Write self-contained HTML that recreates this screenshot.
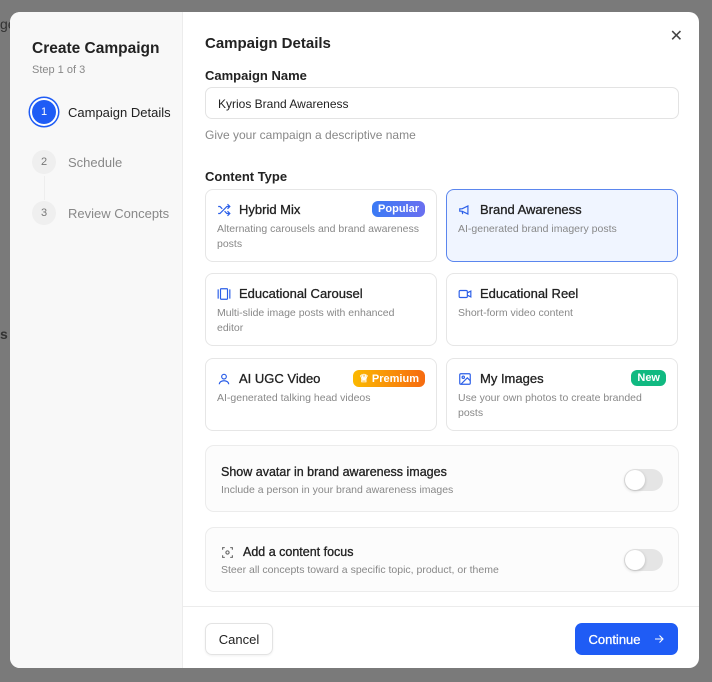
<!DOCTYPE html>
<html><head><meta charset="utf-8"><style>
*{box-sizing:border-box;margin:0;padding:0}
body{width:712px;height:682px;background:#7a7a7a;font-family:"Liberation Sans",sans-serif;position:relative;overflow:hidden;color:#1a1a1a}
.bgtxt{position:absolute;color:#333;font-size:14px}
.modal{position:absolute;left:10px;top:12px;width:689px;height:656px;background:#fff;border-radius:10px;overflow:hidden}
.side{position:absolute;left:0;top:0;width:173px;height:656px;background:#f8f8f8;border-right:1px solid #ececec}
.side h1{position:absolute;left:22px;top:28px;font-size:15.5px;font-weight:600;color:#222}
.side .sub{position:absolute;left:22px;top:52px;font-size:11px;color:#888}
.step{position:absolute;left:22px;display:flex;align-items:center;font-size:13px;color:#888}
.num{width:24px;height:24px;border-radius:50%;background:#efefef;color:#777;font-size:11px;display:flex;align-items:center;justify-content:center;margin-right:12px}
.num.a{background:#1f5cf5;color:#fff;box-shadow:0 0 0 2px #fff,0 0 0 3.5px #1f5cf5}
.main{position:absolute;left:195px;top:0;right:0}
.t{position:absolute;font-size:14px;font-weight:600;color:#222}
.input{position:absolute;left:0;top:75px;width:474px;height:32px;border:1px solid #e3e3e3;border-radius:7px;font-size:12px;padding:9px 12px;color:#222}
.card{position:absolute;width:232px;border:1px solid #e6e6e6;border-radius:8px;padding:12px 11px;background:#fff}
.card.sel{background:#f0f5ff;border-color:#5b86ee}
.card .h{display:flex;align-items:center;font-size:13px;color:#222;-webkit-text-stroke:0.3px #222}
.card .h svg{margin-right:8px}
.card .d{font-size:10.5px;color:#888;margin-top:5px;line-height:14.5px;width:205px}
.badge{position:absolute;right:11px;top:11px;font-size:11px;font-weight:700;color:#fff;border-radius:6px;padding:2px 6px}
.tog{position:absolute;left:0;width:474px;border:1px solid #ececec;border-radius:9px;background:#fcfcfc;padding:0 15px}
.tt{-webkit-text-stroke:0.3px #222;color:#222}
.sw{position:absolute;right:15px;width:39px;height:22px;border-radius:11px;background:#e5e5e5}
.sw:after{content:"";position:absolute;left:1px;top:1px;width:20px;height:20px;border-radius:50%;background:#fff;box-shadow:0 1px 3px rgba(0,0,0,.2)}
.foot{position:absolute;left:173px;right:0;top:594px;height:62px;border-top:1px solid #ececec}
.btn{position:absolute;top:16px;height:32px;border-radius:7px;font-size:13px;display:flex;align-items:center;justify-content:center}
</style></head><body>
<div class="bgtxt" style="left:0;top:16px">ge</div>
<div class="bgtxt" style="left:0;top:326px;font-weight:600">s</div>
<div class="modal">
<div class="side">
<h1>Create Campaign</h1>
<div class="sub">Step 1 of 3</div>
<div class="step" style="top:88px;color:#222;font-weight:500"><div class="num a">1</div>Campaign Details</div>
<div class="step" style="top:138px"><div class="num">2</div>Schedule</div>
<div style="position:absolute;left:34px;top:164px;width:1px;height:24px;background:#eee"></div>
<div class="step" style="top:189px"><div class="num">3</div>Review Concepts</div>
</div>
<div style="position:absolute;right:16px;top:14px;font-size:16px;color:#444">✕</div>
<div class="main">
<div class="t" style="top:23px;font-size:15px">Campaign Details</div>
<div class="t" style="top:56px;font-size:13px">Campaign Name</div>
<div class="input">Kyrios Brand Awareness</div>
<div style="position:absolute;top:116px;font-size:12px;color:#888">Give your campaign a descriptive name</div>
<div class="t" style="top:157px;font-size:13px">Content Type</div>

<div class="card" style="left:0;top:177px;height:73px"><div class="h"><svg width="14" height="14" viewBox="0 0 24 24" fill="none" stroke="#2a5ee8" stroke-width="2"><path d="M2 18h3l12-12h5M18 2l4 4-4 4M2 6h3l4 4M13 14l4 4h5M18 14l4 4-4 4"/></svg>Hybrid Mix</div><div class="d">Alternating carousels and brand awareness posts</div><span class="badge" style="background:linear-gradient(90deg,#3a7af5,#6a6ff0)">Popular</span></div>
<div class="card sel" style="left:241px;top:177px;height:73px"><div class="h"><svg width="14" height="14" viewBox="0 0 24 24" fill="none" stroke="#2a5ee8" stroke-width="2"><path d="M3 10v4h4l10 5V5L7 10H3zM7 14l1 5"/></svg>Brand Awareness</div><div class="d">AI-generated brand imagery posts</div></div>
<div class="card" style="left:0;top:261px;height:73px"><div class="h"><svg width="14" height="14" viewBox="0 0 24 24" fill="none" stroke="#2a5ee8" stroke-width="2"><rect x="6" y="3" width="12" height="18" rx="1"/><path d="M2 4v16M22 4v16"/></svg>Educational Carousel</div><div class="d">Multi-slide image posts with enhanced editor</div></div>
<div class="card" style="left:241px;top:261px;height:73px"><div class="h"><svg width="14" height="14" viewBox="0 0 24 24" fill="none" stroke="#2a5ee8" stroke-width="2"><rect x="2" y="6" width="14" height="12" rx="2"/><path d="M16 10l6-3v10l-6-3"/></svg>Educational Reel</div><div class="d">Short-form video content</div></div>
<div class="card" style="left:0;top:346px;height:73px"><div class="h"><svg width="14" height="14" viewBox="0 0 24 24" fill="none" stroke="#2a5ee8" stroke-width="2"><circle cx="12" cy="8" r="4"/><path d="M4 21c0-4 4-6 8-6s8 2 8 6"/></svg>AI UGC Video</div><div class="d">AI-generated talking head videos</div><span class="badge" style="background:linear-gradient(90deg,#fbb900,#f66a10)">♕ Premium</span></div>
<div class="card" style="left:241px;top:346px;height:73px"><div class="h"><svg width="14" height="14" viewBox="0 0 24 24" fill="none" stroke="#2a5ee8" stroke-width="2"><rect x="3" y="3" width="18" height="18" rx="2"/><circle cx="9" cy="9" r="2"/><path d="M21 15l-5-5L5 21"/></svg>My Images</div><div class="d">Use your own photos to create branded posts</div><span class="badge" style="background:#10b981">New</span></div>

<div class="tog" style="top:433px;height:67px"><div class="tt" style="position:absolute;left:15px;top:19px;font-size:12.5px">Show avatar in brand awareness images</div><div style="position:absolute;left:15px;top:38px;font-size:10.5px;color:#888">Include a person in your brand awareness images</div><div class="sw" style="top:23px"></div></div>
<div class="tog" style="top:515px;height:65px"><div class="tt" style="position:absolute;left:15px;top:17px;font-size:12.5px;display:flex;align-items:center"><svg width="13" height="13" viewBox="0 0 24 24" fill="none" stroke="#666" stroke-width="2" style="margin-right:9px"><path d="M3 7V3h4M17 3h4v4M21 17v4h-4M7 21H3v-4"/><circle cx="12" cy="12" r="3"/></svg>Add a content focus</div><div style="position:absolute;left:15px;top:36px;font-size:10.5px;color:#888">Steer all concepts toward a specific topic, product, or theme</div><div class="sw" style="top:21px"></div></div>
</div>
<div class="foot">
<div class="btn" style="left:22px;width:68px;border:1px solid #e3e3e3;color:#222;box-shadow:0 1px 2px rgba(0,0,0,.06)">Cancel</div>
<div class="btn" style="right:21px;width:103px;background:#1f5cf5;color:#fff;-webkit-text-stroke:0.3px #fff">Continue<svg width="12" height="12" viewBox="0 0 24 24" fill="none" stroke="#fff" stroke-width="2.2" style="margin-left:12px"><path d="M4 12h16M13 5l7 7-7 7"/></svg></div>
</div>
</div>
</body></html>
